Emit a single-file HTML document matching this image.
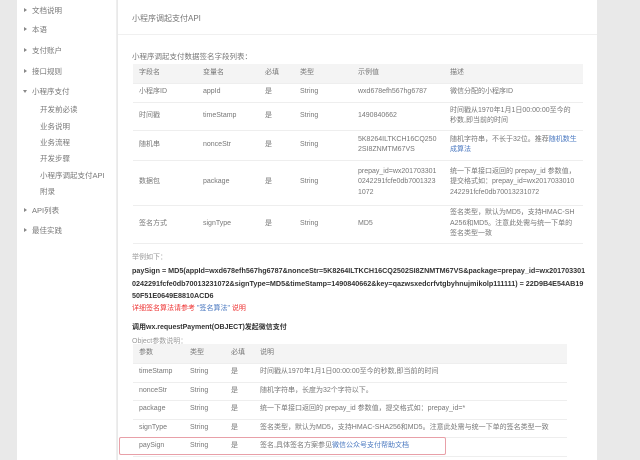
<!DOCTYPE html>
<html><head><meta charset="utf-8"><style>
*{margin:0;padding:0;box-sizing:border-box}
body{width:640px;height:460px;overflow:hidden;background:#e9e9e9;font-family:"Liberation Sans","Noto Sans CJK SC",sans-serif;font-size:7.5px;color:#777;position:relative}
.side{position:absolute;left:17px;top:0;width:100px;height:460px;background:#fff;border-right:1px solid #eee}
.side div{position:absolute;left:15px;white-space:nowrap}
.side .a::before{content:"";position:absolute;left:-8px;top:3px;border-left:3px solid #888;border-top:2.5px solid transparent;border-bottom:2.5px solid transparent}
.side .o::before{content:"";position:absolute;left:-9px;top:4px;border-top:3px solid #888;border-left:2.5px solid transparent;border-right:2.5px solid transparent}
.side .s{left:23px}
.main{position:absolute;left:118px;top:0;width:479px;height:460px;background:#fff}
.t{position:absolute;white-space:nowrap}
table{position:absolute;border-collapse:collapse;font-size:7px;table-layout:fixed}
td{border-bottom:1px solid #eee;padding:0 6px 0 6px;vertical-align:middle;line-height:10.5px;word-break:break-all}
tr.h td{background:#f4f4f4}
a{color:#4a78c0}
</style></head><body>
<div class="side">
<div class="a" style="top:5px">文档说明</div>
<div class="a" style="top:24px">本语</div>
<div class="a" style="top:45px">支付账户</div>
<div class="a" style="top:66px">接口规则</div>
<div class="o" style="top:86px">小程序支付</div>
<div class="s" style="top:104px">开发前必读</div>
<div class="s" style="top:121px">业务说明</div>
<div class="s" style="top:137px">业务流程</div>
<div class="s" style="top:153px">开发步骤</div>
<div class="s" style="top:170px">小程序调起支付API</div>
<div class="s" style="top:186px">附录</div>
<div class="a" style="top:205px">API列表</div>
<div class="a" style="top:225px">最佳实践</div>
</div>
<div class="main">
<div class="t" style="left:14px;top:13px;font-size:8px">小程序调起支付API</div>
<div style="position:absolute;left:0;top:34px;width:479px;border-top:1px solid #f0f0f0"></div>
<div class="t" style="left:14px;top:51px">小程序调起支付数据签名字段列表：</div>
<table style="left:15px;top:64px;width:450px">
<colgroup><col style="width:64px"><col style="width:62px"><col style="width:35px"><col style="width:58px"><col style="width:92px"><col></colgroup>
<tr class="h" style="height:19px"><td>字段名</td><td>变量名</td><td>必填</td><td>类型</td><td>示例值</td><td>描述</td></tr>
<tr style="height:19px"><td>小程序ID</td><td>appId</td><td>是</td><td>String</td><td>wxd678efh567hg6787</td><td>微信分配的小程序ID</td></tr>
<tr style="height:28px"><td>时间戳</td><td>timeStamp</td><td>是</td><td>String</td><td>1490840662</td><td>时间戳从1970年1月1日00:00:00至今的秒数,即当前的时间</td></tr>
<tr style="height:30px"><td>随机串</td><td>nonceStr</td><td>是</td><td>String</td><td>5K8264ILTKCH16CQ2502SI8ZNMTM67VS</td><td>随机字符串，不长于32位。推荐<a>随机数生成算法</a></td></tr>
<tr style="height:45px"><td>数据包</td><td>package</td><td>是</td><td>String</td><td>prepay_id=wx2017033010242291fcfe0db70013231072</td><td>统一下单接口返回的 prepay_id 参数值，提交格式如：prepay_id=wx2017033010242291fcfe0db70013231072</td></tr>
<tr style="height:38px"><td>签名方式</td><td>signType</td><td>是</td><td>String</td><td>MD5</td><td>签名类型，默认为MD5，支持HMAC-SHA256和MD5。注意此处需与统一下单的签名类型一致</td></tr>
</table>
<div class="t" style="left:14px;top:252px;font-size:7px;color:#999">举例如下：</div>
<div style="position:absolute;left:14px;top:265px;width:454px;font-size:7.2px;font-weight:bold;color:#333;line-height:12.5px;word-break:break-all">paySign = MD5(appId=wxd678efh567hg6787&amp;nonceStr=5K8264ILTKCH16CQ2502SI8ZNMTM67VS&amp;package=prepay_id=wx2017033010242291fcfe0db70013231072&amp;signType=MD5&amp;timeStamp=1490840662&amp;key=qazwsxedcrfvtgbyhnujmikolp111111) = 22D9B4E54AB1950F51E0649E8810ACD6</div>
<div class="t" style="left:14px;top:303px;color:#e33;font-size:7px">详细签名算法请参考 <a>"签名算法"</a> 说明</div>
<div class="t" style="left:14px;top:322px;font-weight:bold;color:#333;font-size:7px">调用wx.requestPayment(OBJECT)发起微信支付</div>
<div class="t" style="left:14px;top:336px;font-size:7px;color:#999">Object参数说明：</div>
<table style="left:15px;top:344px;width:434px">
<colgroup><col style="width:51px"><col style="width:41px"><col style="width:29px"><col></colgroup>
<tr class="h" style="height:19px"><td>参数</td><td>类型</td><td>必填</td><td>说明</td></tr>
<tr style="height:19px"><td>timeStamp</td><td>String</td><td>是</td><td>时间戳从1970年1月1日00:00:00至今的秒数,即当前的时间</td></tr>
<tr style="height:18px"><td>nonceStr</td><td>String</td><td>是</td><td>随机字符串，长度为32个字符以下。</td></tr>
<tr style="height:19px"><td>package</td><td>String</td><td>是</td><td>统一下单接口返回的 prepay_id 参数值，提交格式如：prepay_id=*</td></tr>
<tr style="height:18px"><td>signType</td><td>String</td><td>是</td><td>签名类型，默认为MD5，支持HMAC-SHA256和MD5。注意此处需与统一下单的签名类型一致</td></tr>
<tr style="height:19px"><td>paySign</td><td>String</td><td>是</td><td>签名,具体签名方案参见<a>微信公众号支付帮助文档</a></td></tr>
</table>
<div style="position:absolute;left:1px;top:437px;width:327px;height:18px;border:1px solid #e8a0a8;border-radius:2px"></div>
</div>
</body></html>
